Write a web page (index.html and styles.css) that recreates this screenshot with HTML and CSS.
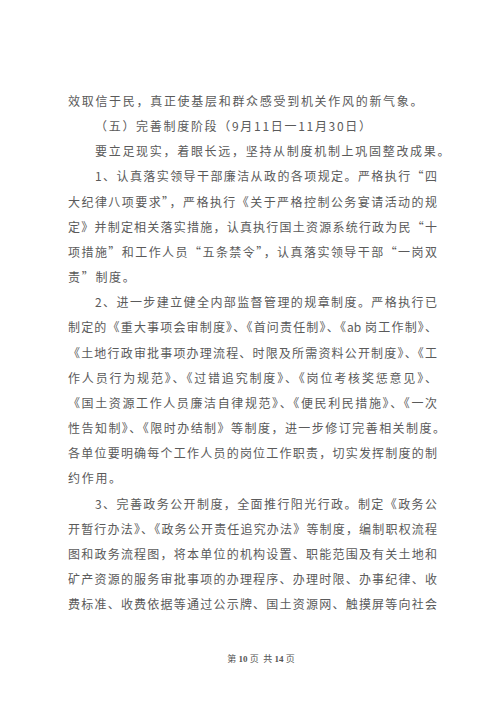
FILE: index.html
```html
<!DOCTYPE html>
<html lang="zh-CN">
<head>
    <meta charset="utf-8">
    <meta name="viewport" content="width=device-width, initial-scale=1.0">
    <link rel="stylesheet" href="styles.css">
</head>
<body>
    <div class="page">
        <p>
            <span class="ln end">效取信于民，真正使基层和群众感受到机关作风的新气象。</span>
        </p>
        <p>
            <span class="ln end indent">（五）完善制度阶段（9月11日一11月30日）</span>
        </p>
        <p>
            <span class="ln end indent">要立足现实，着眼长远，坚持从制度机制上巩固整改成果。</span>
        </p>
        <p>
            <span class="ln full indent">1、认真落实领导干部廉洁从政的各项规定。严格执行“四</span>
            <span class="ln full">大纪律八项要求”，严格执行《关于严格控制公务宴请活动的规</span>
            <span class="ln full">定》并制定相关落实措施，认真执行国土资源系统行政为民“十</span>
            <span class="ln full">项措施”和工作人员“五条禁令”，认真落实领导干部“一岗双</span>
            <span class="ln end">责”制度。</span>
        </p>
        <p>
            <span class="ln full indent">2、进一步建立健全内部监督管理的规章制度。严格执行已</span>
            <span class="ln full">制定的《重大事项会审制度》、《首问责任制》、《ab 岗工作制》、</span>
            <span class="ln full">《土地行政审批事项办理流程、时限及所需资料公开制度》、《工</span>
            <span class="ln full">作人员行为规范》、《过错追究制度》、《岗位考核奖惩意见》、</span>
            <span class="ln full">《国土资源工作人员廉洁自律规范》、《便民利民措施》、《一次</span>
            <span class="ln full hang">性告知制》、《限时办结制》等制度，进一步修订完善相关制度。</span>
            <span class="ln full">各单位要明确每个工作人员的岗位工作职责，切实发挥制度的制</span>
            <span class="ln end">约作用。</span>
        </p>
        <p>
            <span class="ln full indent">3、完善政务公开制度，全面推行阳光行政。制定《政务公</span>
            <span class="ln full">开暂行办法》、《政务公开责任追究办法》等制度，编制职权流程</span>
            <span class="ln full">图和政务流程图，将本单位的机构设置、职能范围及有关土地和</span>
            <span class="ln full">矿产资源的服务审批事项的办理程序、办理时限、办事纪律、收</span>
            <span class="ln full">费标准、收费依据等通过公示牌、国土资源网、触摸屏等向社会</span>
        </p>
        <div class="footer">第 <b>10</b> 页&nbsp; 共 <b>14</b> 页</div>
    </div>
</body>
</html>
```

FILE: styles.css
```css
body {
    margin: 0;
    background-color: #ffffff;
}

div.page {
    width: 369px;
    padding: 88px 0 0 68px;
    font-family: "Noto Sans CJK SC", "Liberation Serif", serif;
    font-size: 12px;
    line-height: 25.15px;
    color: #5a5a5a;
}

div.page p {
    margin: 0;
}

span.ln {
    display: block;
    white-space: nowrap;
}

span.full {
    text-align: justify;
    text-align-last: justify;
}

span.hang {
    margin-right: -8px;
}

span.end {
    letter-spacing: 1.7px;
}

span.indent {
    padding-left: 27px;
}

div.footer {
    margin-top: 37px;
    padding-left: 17px;
    text-align: center;
    font-family: "Liberation Serif", "Noto Sans CJK SC", serif;
    font-size: 9px;
    line-height: 12px;
    color: #555555;
}

div.footer b {
    font-weight: bold;
}
```
